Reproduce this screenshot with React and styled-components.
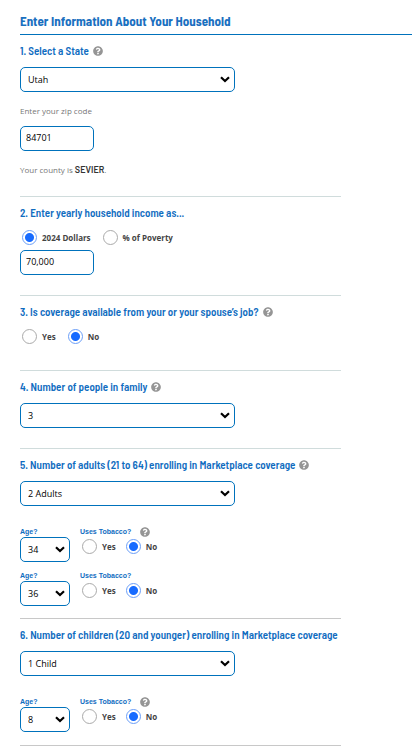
import React, { useState } from 'react';
import styled, { createGlobalStyle } from 'styled-components';
import { FaQuestionCircle } from 'react-icons/fa';

const GlobalStyle = createGlobalStyle`
	* {
		box-sizing: border-box;
	}

	body {
		margin: 0;
		background-color: #fff;
		color: #444;
		font-family: 'Open Sans', 'Noto Sans', sans-serif;
		font-size: 9px;
	}
`;

const headingFont = `'Barlow Semi Condensed', 'Barlow', 'Roboto', sans-serif`;

const Form = styled.form`
	padding: 12px 5px 0 20px;
`;

const Title = styled.h1`
	margin: 0;
	padding-bottom: 4px;
	border-bottom: 1px solid #0072bc;
	color: #1a70c0;
	font-family: ${headingFont};
	font-size: 13px;
	font-weight: 700;
	line-height: 18px;
`;

const Section = styled.section`
	max-width: 321px;
	padding: 7px 0 ${(props) => props.$bottom}px;
	border-bottom: 1px solid ${(props) => (props.$dark ? '#c8c8c8' : '#d0dcdc')};
`;

const Heading = styled.h2`
	display: flex;
	align-items: center;
	gap: 4px;
	margin: 0 0 7px;
	color: #0f6cbf;
	font-family: ${headingFont};
	font-size: 11px;
	font-weight: 600;
	line-height: 18px;
	white-space: nowrap;
`;

const HelpButton = styled.button`
	display: flex;
	padding: 0;
	border: 0;
	background: none;
	color: #959595;
	font-size: 10px;
	cursor: pointer;
`;

const SelectBox = styled.div`
	position: relative;
	width: ${(props) => (props.$small ? '50px' : '100%')};
	max-width: 215px;

	svg {
		position: absolute;
		top: 9px;
		right: 5px;
		pointer-events: none;
	}
`;

const StyledSelect = styled.select`
	display: block;
	width: 100%;
	height: 25px;
	padding: 0 16px 0 7px;
	border: 1px solid #0072bc;
	border-radius: 5px;
	appearance: none;
	background-color: #fff;
	color: #000;
	font-family: inherit;
	font-size: 9px;
`;

const TextInput = styled.input`
	display: block;
	width: 74px;
	height: 25px;
	padding: 0 5px 2px;
	border: 1px solid #0072bc;
	border-radius: 5px;
	background-color: #fff;
	color: #000;
	font-family: inherit;
	font-size: 9px;
`;

const ZipLabel = styled.label`
	display: block;
	margin: 12px 0 8px;
	color: #777;
	font-size: 8px;
	line-height: 14px;
`;

const County = styled.p`
	margin: 12px 0 0;
	color: #777;
	font-size: 8px;
	line-height: 14px;

	strong {
		color: #333;
		font-family: 'Barlow', 'Roboto', sans-serif;
		font-size: 9px;
		font-weight: 600;
	}
`;

const RadioRow = styled.div`
	display: flex;
	gap: ${(props) => (props.$compact ? '10px' : '12px')};
	padding: ${(props) => (props.$compact ? '2px 2px 0' : '1px 2px 5px')};
`;

const RadioLabel = styled.label`
	display: flex;
	align-items: center;
	gap: 5px;
	color: #444;
	font-size: 8px;
	font-weight: 700;
	line-height: 15px;
	white-space: nowrap;
`;

const Radio = styled.input`
	width: 15px;
	height: 15px;
	margin: 0;
	border: 1px solid #aaa;
	border-radius: 50%;
	appearance: none;
	background-color: #fff;

	&:checked {
		border-color: #6c9ff8;
		background-image: radial-gradient(circle, #176bff 4px, transparent 5px);
	}
`;

const Person = styled.div`
	display: grid;
	grid-template-columns: 50px auto;
	column-gap: 10px;
	justify-content: start;
	margin-top: ${(props) => (props.$first ? '21px' : '9px')};
`;

const SmallLabel = styled.div`
	display: flex;
	align-items: center;
	gap: 9px;
	height: 10px;
	color: #0f6cbf;
	font-family: 'Liberation Sans', Arial, sans-serif;
	font-size: 7px;
	font-weight: 700;
	line-height: 10px;
`;

function Help({ topic }) {
	return (
		<HelpButton type='button' aria-label={topic}>
			<FaQuestionCircle />
		</HelpButton>
	);
}

function Select({ options, value, small, ...rest }) {
	return (
		<SelectBox $small={small}>
			<StyledSelect defaultValue={value} {...rest}>
				{options.map((option) => (
					<option key={option}>{option}</option>
				))}
			</StyledSelect>
			<svg width='10' height='7' viewBox='0 0 10 7' aria-hidden='true'>
				<path d='M1 1.2 L5 5 L9 1.2' fill='none' stroke='#000' strokeWidth='2.2' />
			</svg>
		</SelectBox>
	);
}

function RadioGroup({ name, label, options, initial, compact }) {
	const [selected, setSelected] = useState(initial);

	return (
		<RadioRow role='radiogroup' aria-label={label} $compact={compact}>
			{options.map((option) => (
				<RadioLabel key={option}>
					<Radio
						type='radio'
						name={name}
						checked={selected === option}
						onChange={() => setSelected(option)}
					/>
					{option}
				</RadioLabel>
			))}
		</RadioRow>
	);
}

function PersonRow({ id, age, first }) {
	return (
		<Person $first={first}>
			<div>
				<SmallLabel as='label' htmlFor={id}>
					Age?
				</SmallLabel>
				<Select id={id} small value={age} options={[age]} />
			</div>
			<div>
				<SmallLabel>
					Uses Tobacco?
					{first && <Help topic='About tobacco use' />}
				</SmallLabel>
				<RadioGroup
					name={`${id}-tobacco`}
					label='Uses Tobacco?'
					options={['Yes', 'No']}
					initial='No'
					compact
				/>
			</div>
		</Person>
	);
}

function App() {
	return (
		<>
			<GlobalStyle />
			<Form>
				<Title>Enter Information About Your Household</Title>

				<Section $bottom={19}>
					<Heading>
						<label htmlFor='state'>1. Select a State</label>
						<Help topic='About states' />
					</Heading>
					<Select id='state' value='Utah' options={['Utah']} />
					<ZipLabel htmlFor='zip'>Enter your zip code</ZipLabel>
					<TextInput id='zip' defaultValue='84701' />
					<County>
						Your county is <strong>SEVIER</strong>.
					</County>
				</Section>

				<Section $bottom={20}>
					<Heading>2. Enter yearly household income as...</Heading>
					<RadioGroup
						name='income-type'
						label='Income type'
						options={['2024 Dollars', '% of Poverty']}
						initial='2024 Dollars'
					/>
					<TextInput aria-label='Yearly household income' defaultValue='70,000' />
				</Section>

				<Section $bottom={21}>
					<Heading>
						3. Is coverage available from your or your spouse’s job?
						<Help topic='About job coverage' />
					</Heading>
					<RadioGroup
						name='job-coverage'
						label='Job coverage available'
						options={['Yes', 'No']}
						initial='No'
					/>
				</Section>

				<Section $bottom={20}>
					<Heading>
						<label htmlFor='family'>4. Number of people in family</label>
						<Help topic='About family size' />
					</Heading>
					<Select id='family' value='3' options={['1', '2', '3', '4', '5']} />
				</Section>

				<Section $bottom={12} $dark>
					<Heading>
						<label htmlFor='adults'>
							5. Number of adults (21 to 64) enrolling in Marketplace coverage
						</label>
						<Help topic='About adults' />
					</Heading>
					<Select
						id='adults'
						value='2 Adults'
						options={['No Adults', '1 Adult', '2 Adults']}
					/>
					<PersonRow id='adult-1' age='34' first />
					<PersonRow id='adult-2' age='36' />
				</Section>

				<Section $bottom={13} $dark>
					<Heading>
						<label htmlFor='children'>
							6. Number of children (20 and younger) enrolling in Marketplace coverage
						</label>
					</Heading>
					<Select
						id='children'
						value='1 Child'
						options={['No Children', '1 Child', '2 Children']}
					/>
					<PersonRow id='child-1' age='8' first />
				</Section>
			</Form>
		</>
	);
}

export default App;
